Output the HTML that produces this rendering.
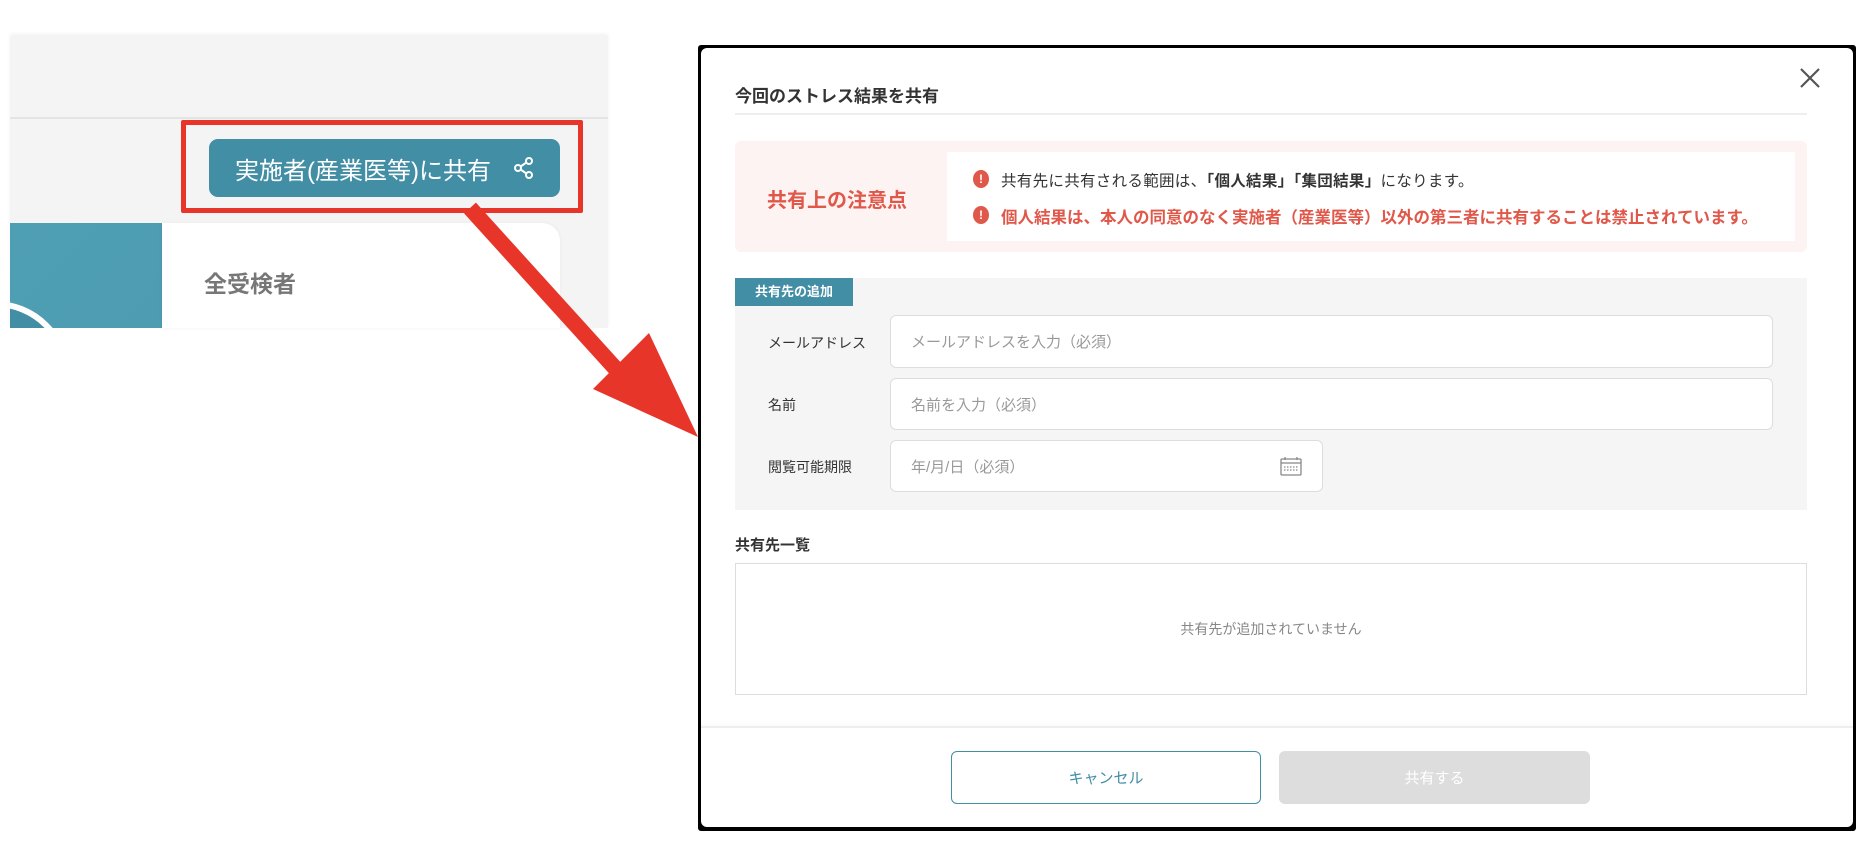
<!DOCTYPE html>
<html><head><meta charset="utf-8">
<style>
*{margin:0;padding:0;box-sizing:border-box}
body{width:1856px;height:842px;background:#fff;position:relative;overflow:hidden;font-family:"Liberation Sans","Noto Sans CJK JP",sans-serif;}
.a{position:absolute}
.lbl{font-size:14px;color:#333;}
.inp{background:#fff;border:1px solid #ddd;border-radius:6px;font-size:15px;color:#999;padding-left:20px;display:flex;align-items:center}
</style></head><body>
<!-- left panel -->
<div class="a" style="left:10px;top:36px;width:598px;height:292px;background:#f4f4f4;box-shadow:0 -2px 4px rgba(0,0,0,.06)"></div>
<div class="a" style="left:10px;top:117px;width:598px;height:2px;background:#e4e4e4"></div>
<div class="a" style="left:209px;top:139px;width:351px;height:58px;background:#428ea5;border-radius:9px;color:#fff;font-size:24px;display:flex;align-items:center;padding-left:26px;white-space:nowrap">実施者(産業医等)に共有
<svg style="margin-left:22px" width="22" height="24" viewBox="0 0 22 24" fill="none" stroke="#fff" stroke-width="2"><circle cx="16" cy="5" r="3"/><circle cx="5" cy="12" r="3"/><circle cx="16" cy="19" r="3"/><path d="M7.6 10.5 13.4 6.5M7.6 13.5 13.4 17.5"/></svg></div>
<div class="a" style="left:181px;top:120px;width:402px;height:93px;border:5px solid #e8352a;border-radius:2px"></div>
<div class="a" style="left:10px;top:223px;width:152px;height:105px;background:linear-gradient(135deg,#4f9fb4,#4d9cb2);overflow:hidden">
<div class="a" style="left:-90px;top:78px;width:150px;height:150px;border:6px solid #fff;border-radius:50%;background:#428ea5"></div></div>
<div class="a" style="left:162px;top:223px;width:398px;height:105px;background:#fff;border-top-right-radius:18px;box-shadow:0 0 4px rgba(0,0,0,.05)"></div>
<div class="a" style="left:204px;top:265px;font-size:23px;font-weight:bold;color:#777">全受検者</div>
<!-- arrow -->
<svg class="a" style="left:0;top:0" width="760" height="460"><line x1="470" y1="208" x2="615" y2="368" stroke="#e8352a" stroke-width="16"/><polygon points="593,389 649,333 698,437" fill="#e8352a"/></svg>
<!-- modal -->
<div class="a" style="left:698px;top:45px;width:1158px;height:786px;background:#000;border-radius:3px"></div>
<div class="a" style="left:701px;top:48px;width:1152px;height:779px;background:#fff;border-radius:6px"></div>
<div class="a" style="left:735px;top:82px;font-size:17px;font-weight:bold;color:#333">今回のストレス結果を共有</div>
<svg class="a" style="left:1799px;top:67px" width="22" height="22" stroke="#555" stroke-width="2.2"><path d="M2 2 20 20M20 2 2 20"/></svg>
<div class="a" style="left:735px;top:113px;width:1072px;height:2px;background:#eee"></div>
<div class="a" style="left:735px;top:141px;width:1072px;height:111px;background:#fdf3f2;border-radius:6px"></div>
<div class="a" style="left:947px;top:152px;width:848px;height:89px;background:#fff"></div>
<div class="a" style="left:767px;top:184px;font-size:20px;font-weight:bold;color:#e0584a">共有上の注意点</div>
<div class="a" style="left:973px;top:170px;width:16px;height:18px;border-radius:50%;background:#e0584a;color:#fff;font-size:12px;font-weight:bold;text-align:center;line-height:18px">!</div>
<div class="a" style="left:1001px;top:169px;font-size:15.5px;letter-spacing:0.3px;color:#333;white-space:nowrap">共有先に共有される範囲は、<b>「個人結果」「集団結果」</b>になります。</div>
<div class="a" style="left:973px;top:206px;width:16px;height:18px;border-radius:50%;background:#e0584a;color:#fff;font-size:12px;font-weight:bold;text-align:center;line-height:18px">!</div>
<div class="a" style="left:1001px;top:204px;font-size:16.5px;font-weight:bold;color:#e0584a;white-space:nowrap">個人結果は、本人の同意のなく実施者（産業医等）以外の第三者に共有することは禁止されています。</div>
<div class="a" style="left:735px;top:278px;width:1072px;height:232px;background:#f5f5f5"></div>
<div class="a" style="left:735px;top:278px;width:118px;height:28px;background:#428ea5;color:#fff;font-size:13px;font-weight:bold;line-height:28px;text-align:center">共有先の追加</div>
<div class="a lbl" style="left:768px;top:333px">メールアドレス</div>
<div class="a inp" style="left:890px;top:315px;width:883px;height:53px">メールアドレスを入力（必須）</div>
<div class="a lbl" style="left:768px;top:395px">名前</div>
<div class="a inp" style="left:890px;top:378px;width:883px;height:52px">名前を入力（必須）</div>
<div class="a lbl" style="left:768px;top:457px">閲覧可能期限</div>
<div class="a inp" style="left:890px;top:440px;width:433px;height:52px">年/月/日（必須）</div>
<svg class="a" style="left:1280px;top:456px" width="22" height="20" fill="none" stroke="#888" stroke-width="1.3"><rect x="1" y="3" width="20" height="16" rx="1"/><path d="M1 7h20M5 1v3M17 1v3"/><path d="M4 11h14M4 14h14" stroke-dasharray="1.5 1.5"/></svg>
<div class="a" style="left:735px;top:534px;font-size:15px;font-weight:bold;color:#333">共有先一覧</div>
<div class="a" style="left:735px;top:563px;width:1072px;height:132px;border:1px solid #ddd;background:#fff;display:flex;align-items:center;justify-content:center;font-size:14px;color:#888">共有先が追加されていません</div>
<div class="a" style="left:701px;top:726px;width:1152px;height:2px;background:#eee;box-shadow:0 -2px 4px rgba(0,0,0,.04)"></div>
<div class="a" style="left:951px;top:751px;width:310px;height:53px;border:1px solid #428ea5;border-radius:6px;color:#428ea5;font-size:15px;display:flex;align-items:center;justify-content:center">キャンセル</div>
<div class="a" style="left:1279px;top:751px;width:311px;height:53px;background:#ddd;border-radius:6px;color:#fff;font-size:15px;display:flex;align-items:center;justify-content:center">共有する</div>
</body></html>
